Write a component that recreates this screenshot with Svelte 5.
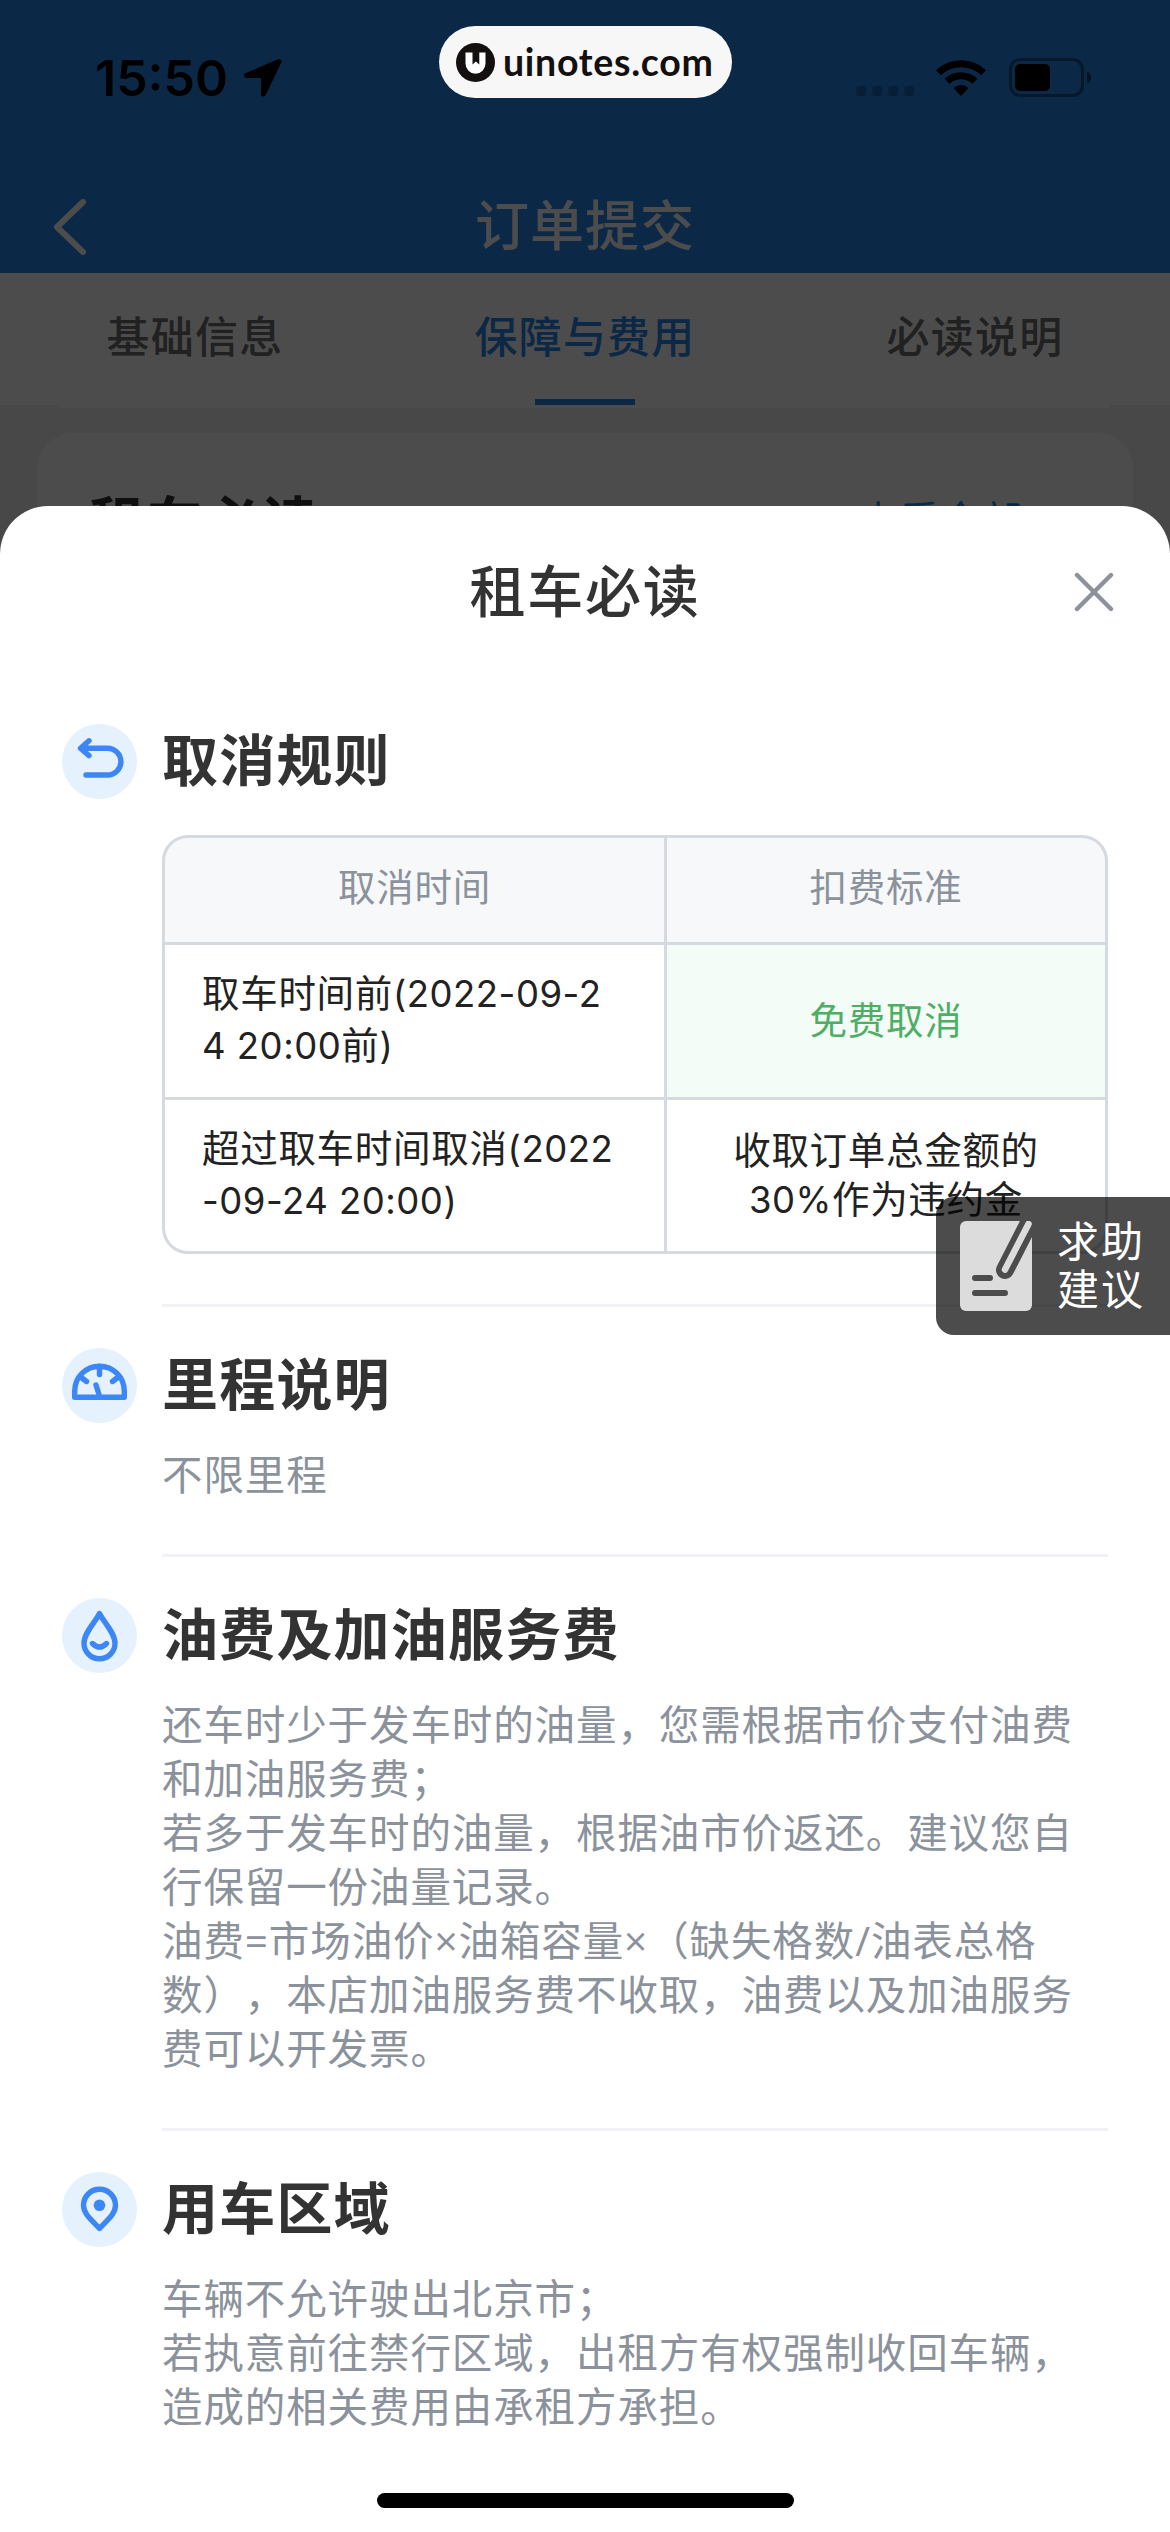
<script>
    // 顶部标签
    let tabs = [
        { id: 1, name: '基础信息' },
        { id: 2, name: '保障与费用' },
        { id: 3, name: '必读说明' },
    ];
    let activeTab = 2;

    // 说明内容，每一项为一行
    let sections = [
        { icon: 'gauge', title: '里程说明', lines: ['不限里程'] },
        {
            icon: 'drop',
            title: '油费及加油服务费',
            lines: [
                '还车时少于发车时的油量，您需根据市价支付油费',
                '和加油服务费；',
                '若多于发车时的油量，根据油市价返还。建议您自',
                '行保留一份油量记录。',
                '油费=市场油价×油箱容量×（缺失格数/油表总格',
                '数），本店加油服务费不收取，油费以及加油服务',
                '费可以开发票。',
            ],
        },
        {
            icon: 'pin',
            title: '用车区域',
            lines: [
                '车辆不允许驶出北京市；',
                '若执意前往禁行区域，出租方有权强制收回车辆，',
                '造成的相关费用由承租方承担。',
            ],
        },
    ];
</script>

<div class="screen" lang="zh-CN">
    <div class="page">
        <header>
            <div class="status">
                <div class="time">
                    <span>15:50</span>
                    <svg class="arrow" width="40" height="40" viewBox="0 0 40 40">
                        <path d="M36 3.5 L3.5 17.6 H20.5 V36 Z" stroke="#000" stroke-width="5" stroke-linejoin="round" />
                    </svg>
                </div>
                <div class="signals">
                    <svg width="58" height="10" viewBox="0 0 58 10" class="dots">
                        <rect width="10" height="10" rx="3" />
                        <rect x="16" width="10" height="10" rx="3" />
                        <rect x="32" width="10" height="10" rx="3" />
                        <rect x="48" width="10" height="10" rx="3" />
                    </svg>
                    <svg width="50" height="38" viewBox="0 0 50 38" class="wifi">
                        <path d="M0 11.3 A36 36 0 0 1 50 11.3 L45 16.3 A29 29 0 0 0 5 16.3 Z" />
                        <path d="M8.6 19.8 A23.5 23.5 0 0 1 41.4 19.8 L36.4 24.8 A16.5 16.5 0 0 0 13.6 24.8 Z" />
                        <path d="M17.5 29 A10.8 10.8 0 0 1 32.5 29 L25 37 Z" />
                    </svg>
                    <svg width="82" height="40" viewBox="0 0 82 40" class="battery">
                        <rect x="1.5" y="1.5" width="72" height="36" rx="10" fill="none" stroke="#000" stroke-width="3" opacity=".4" />
                        <rect x="6" y="6" width="35" height="27" rx="5" />
                        <path d="M78 13.5 a6.5 6.5 0 0 1 0 12 Z" opacity=".5" />
                    </svg>
                </div>
            </div>
            <div class="nav">
                <svg width="34" height="56" viewBox="0 0 34 56">
                    <path d="M30 3 L4 28 L30 53" fill="none" stroke="#fff" stroke-width="6" stroke-linecap="round" stroke-linejoin="round" />
                </svg>
                <h1>订单提交</h1>
            </div>
        </header>
        <nav class="tabs">
            {#each tabs as tab}
                <div class="tab" class:active={tab.id === activeTab}>{tab.name}</div>
            {/each}
        </nav>
        <div class="tail"></div>
        <div class="card">
            <span class="card-title">租车必读</span>
            <span class="card-more">查看全部</span>
        </div>
        <div class="mask"></div>
    </div>

    <div class="pill">
        <svg width="39" height="39" viewBox="0 0 39 39">
            <circle cx="19.5" cy="19.5" r="19.5" fill="#14100f" />
            <path d="M9.5 9.5 H16.5 V21.5 L19.8 18.6 L23.3 21.5 V9.5 H29.5 V20.5 A10 10.3 0 0 1 9.5 20.5 Z" fill="#fff" />
        </svg>
        <span>uinotes.com</span>
    </div>

    <main class="sheet">
        <div class="sheet-head">
            <h2>租车必读</h2>
            <svg width="40" height="40" viewBox="0 0 40 40">
                <path d="M3 3 L37 37 M37 3 L3 37" stroke="#8b929b" stroke-width="4.4" stroke-linecap="round" />
            </svg>
        </div>

        <section>
            <div class="row">
                <svg width="75" height="75" viewBox="0 0 75 75" class="icon">
                    <circle cx="37.5" cy="37.5" r="37.5" />
                    <path d="M24 51 H45.5 a13.4 13.4 0 0 0 0-26.8 H19 M27 16.8 L18.5 24.2 L27 31.6" />
                </svg>
                <h3>取消规则</h3>
            </div>
            <div class="table">
                <div class="th">取消时间</div>
                <div class="th">扣费标准</div>
                <div class="td left">取车时间前<span class="num">(2022-09-2</span><br /><span class="num">4 20:00</span>前<span class="num">)</span></div>
                <div class="td free">免费取消</div>
                <div class="td left">超过取车时间取消<span class="num">(2022</span><br /><span class="num">-09-24 20:00)</span></div>
                <div class="td fee">收取订单总金额的<br /><span class="num">30%</span>作为违约金</div>
            </div>
        </section>

        {#each sections as section}
            <section class="lined">
                <div class="row">
                    <svg width="75" height="75" viewBox="0 0 75 75" class="icon">
                        <circle cx="37.5" cy="37.5" r="37.5" />
                        {#if section.icon === 'gauge'}
                            <path d="M12.7 49.3 V43 a24.8 24.8 0 0 1 49.6 0 V49.3 Z M37.5 18 V26.5 M20 30 L24.5 33.5 M55 30 L50.5 33.5 M34 37 L37.5 48" />
                        {:else if section.icon === 'drop'}
                            <path d="M37.5 15.5 C33.5 24 22 34.5 22 45.3 a15.5 15.5 0 0 0 31 0 C53 34.5 41.5 24 37.5 15.5 Z M30.5 45.5 q7 7 14 0" />
                        {:else}
                            <path d="M37.5 56.5 C31 49 21.5 42.5 21.5 33.3 a16 16 0 0 1 32 0 C53.5 42.5 44 49 37.5 56.5 Z" />
                            <circle cx="37.5" cy="33.3" r="5.8" class="dot" />
                        {/if}
                    </svg>
                    <h3>{section.title}</h3>
                </div>
                <div class="text">
                    {#each section.lines as line}
                        <p>{line}</p>
                    {/each}
                </div>
            </section>
        {/each}
        <div class="home"></div>
    </main>

    <div class="help">
        <svg width="72" height="90" viewBox="0 0 72 90">
            <rect width="72" height="90" rx="6" fill="#dcdcdc" />
            <path d="M70 0 L45 49" stroke="#4c4c4c" stroke-width="18" stroke-linecap="round" />
            <path d="M68.5 3 L45 48.5" stroke="#dcdcdc" stroke-width="6.5" stroke-linecap="round" />
            <path d="M15 57 H30 M15 72 H45" stroke="#4c4c4c" stroke-width="6" stroke-linecap="round" />
        </svg>
        <span>求助<br />建议</span>
    </div>
</div>

<style>
    :global(body) {
        background: #fff;
    }

    .screen {
        position: relative;
        width: 1170px;
        height: 2532px;
        overflow: hidden;
        font-family: 'Inter', 'Noto Sans CJK SC', sans-serif;
        text-spacing-trim: space-all;
        color: #333;
    }

    h1, h2, h3, p {
        margin: 0;
    }

    svg {
        display: block;
        flex: none;
    }

    .page {
        position: relative;
        height: 560px;
        overflow: hidden;
        background: #f2f2f2;
    }

    .mask {
        position: absolute;
        inset: 0;
        background: rgba(0, 0, 0, 0.7);
    }

    header {
        height: 273px;
        background: #2585ed;
    }

    .status {
        display: flex;
        justify-content: space-between;
        height: 178px;
        padding: 0 79px 0 95px;
        box-sizing: border-box;
    }

    .time {
        display: flex;
        gap: 15px;
        height: 156px;
        align-items: center;
        font-size: 50px;
        font-weight: 600;
        color: #000;
    }

    .signals {
        display: flex;
        align-items: flex-start;
        padding-top: 58px;
    }

    .dots {
        margin: 28px 22px 0 0;
        opacity: 0.22;
    }

    .wifi {
        margin: 1px 23px 0 0;
    }

    .nav {
        display: grid;
        grid-template-columns: 100px 1fr 100px;
        align-items: center;
        height: 95px;
    }

    .nav svg {
        margin-left: 53px;
    }

    .nav h1 {
        font-size: 54px;
        font-weight: 500;
        letter-spacing: 1px;
        line-height: 97px;
        text-align: center;
        color: #fff;
    }

    .tabs {
        display: grid;
        grid-template-columns: repeat(3, 1fr);
        height: 132px;
        background: #fff;
    }

    .tab {
        display: flex;
        flex-direction: column;
        align-items: center;
        height: 132px;
        padding-top: 3px;
        box-sizing: border-box;
        font-size: 43px;
        font-weight: 500;
        letter-spacing: 1.2px;
        line-height: 123px;
        color: #6e6e6e;
    }

    .tab.active {
        color: #2585ed;
    }

    .tab.active::after {
        content: '';
        width: 100px;
        height: 6px;
        background: #2585ed;
    }

    .tail {
        height: 3px;
        margin: 0 60px 25px;
        background: #fff;
    }

    .card {
        display: flex;
        justify-content: space-between;
        height: 200px;
        margin: 0 37px;
        padding: 50px 110px 0 52px;
        border-radius: 36px;
        background: #fff;
    }

    .card-title {
        font-size: 56px;
        font-weight: 600;
        letter-spacing: 1.5px;
        line-height: 80px;
    }

    .card-more {
        font-size: 40px;
        letter-spacing: 1.2px;
        line-height: 76px;
        color: #2585ed;
    }

    .pill {
        position: absolute;
        top: 26px;
        left: 439px;
        display: flex;
        align-items: center;
        gap: 8px;
        width: 293px;
        height: 72px;
        padding-left: 17px;
        box-sizing: border-box;
        border-radius: 36px;
        background: #f7f7f7;
        font-family: 'Lato', sans-serif;
        font-size: 37.5px;
        font-weight: 700;
        letter-spacing: 0.7px;
        line-height: 72px;
        color: #14100f;
    }

    .sheet {
        position: relative;
        height: 2026px;
        margin-top: -54px;
        padding: 0 62px;
        box-sizing: border-box;
        border-radius: 48px 48px 0 0;
        background: #fff;
    }

    .sheet-head {
        display: grid;
        grid-template-columns: 40px 1fr 40px;
        align-items: center;
        height: 171px;
        margin: 0 -6px 47px;
    }

    .sheet-head h2 {
        grid-column: 2;
        font-size: 56px;
        font-weight: 500;
        letter-spacing: 1.8px;
        line-height: 80px;
        text-align: center;
    }

    .lined::before {
        content: '';
        display: block;
        height: 3px;
        margin: 0 0 41px 100px;
        background: #f0f2f5;
    }

    .row {
        display: flex;
        align-items: center;
        gap: 25px;
        height: 75px;
    }

    .row h3 {
        font-size: 56px;
        font-weight: 600;
        letter-spacing: 1.2px;
        line-height: 75px;
    }

    .icon circle {
        fill: #e5f1fd;
    }

    .icon path {
        fill: none;
        stroke: #3c86f5;
        stroke-width: 5.4;
        stroke-linecap: round;
        stroke-linejoin: round;
    }

    .icon .dot {
        fill: #3c86f5;
    }

    .table {
        display: grid;
        grid-template-columns: 499px 1fr;
        grid-template-rows: 104px 152px 151px;
        gap: 3px;
        margin: 36px 0 50px 100px;
        border: 3px solid #d5dae1;
        border-radius: 26px;
        overflow: hidden;
        background: #d5dae1;
        font-size: 37.5px;
        letter-spacing: 0.7px;
    }

    .th {
        text-align: center;
        line-height: 99px;
        background: #f7f8fa;
        color: #8b929b;
    }

    .td {
        padding-top: 23px;
        background: #fff;
        line-height: 51px;
        white-space: nowrap;
        color: #222;
    }

    .td.left {
        padding-left: 37px;
    }

    .td.free {
        padding-top: 50px;
        text-align: center;
        background: #f3fcf7;
        color: #4fae66;
    }

    .td.fee {
        padding-top: 26px;
        line-height: 49px;
        text-align: center;
    }

    .num {
        font-size: 36.5px;
        letter-spacing: 0.5px;
    }

    .text {
        margin: 25px 0 52px 100px;
        font-family: 'Open Sans', 'Noto Sans CJK SC', sans-serif;
        font-size: 40.5px;
        letter-spacing: 0.9px;
        line-height: 54px;
        white-space: nowrap;
        color: #8b929b;
    }

    .home {
        position: absolute;
        left: 377px;
        bottom: 24px;
        width: 417px;
        height: 15px;
        border-radius: 8px;
        background: #000;
    }

    .help {
        position: absolute;
        top: 1197px;
        right: 0;
        display: flex;
        align-items: center;
        gap: 25px;
        width: 234px;
        height: 138px;
        padding-left: 24px;
        box-sizing: border-box;
        border-radius: 18px 0 0 18px;
        background: rgba(0, 0, 0, 0.7);
        font-size: 42px;
        letter-spacing: 2px;
        line-height: 48px;
        color: #fff;
    }
</style>
